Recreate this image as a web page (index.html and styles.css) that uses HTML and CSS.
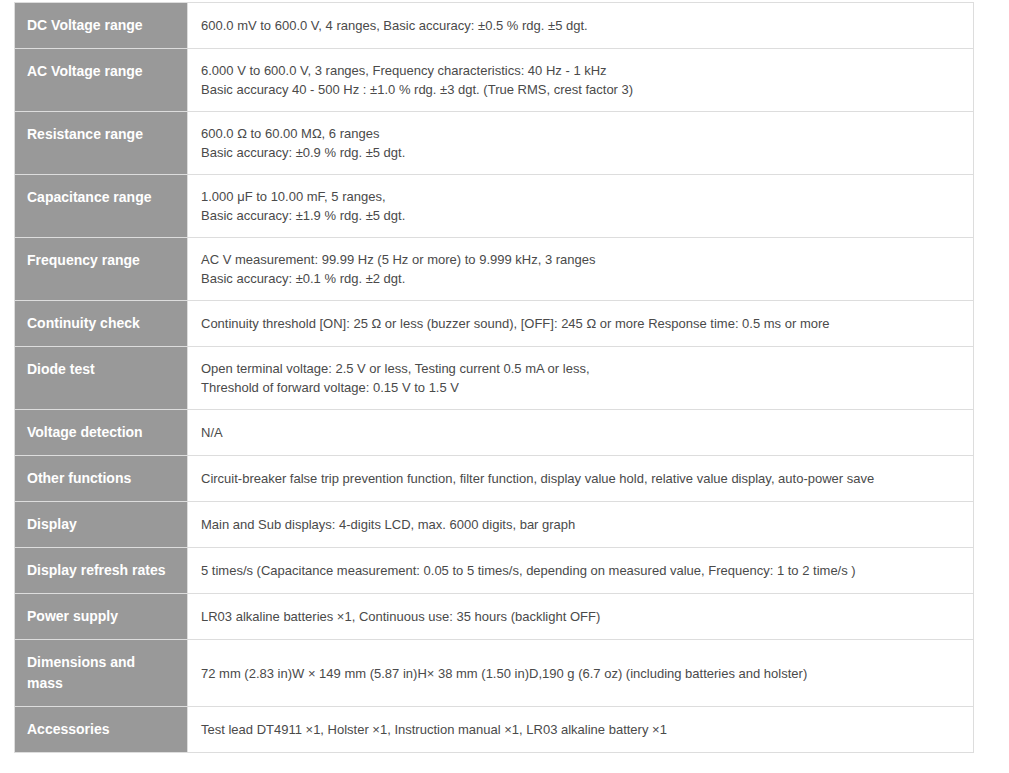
FILE: index.html
```html
<!DOCTYPE html>
<html>
<head>
<meta charset="utf-8">
<link rel="stylesheet" href="styles.css">
</head>
<body>
<div class="wrap">
<table class="spec">
<tr><th>DC Voltage range</th><td>600.0 mV to 600.0 V, 4 ranges, Basic accuracy: ±0.5 % rdg. ±5 dgt.</td></tr>
<tr><th>AC Voltage range</th><td>6.000 V to 600.0 V, 3 ranges, Frequency characteristics: 40 Hz - 1 kHz<br>Basic accuracy 40 - 500 Hz : ±1.0 % rdg. ±3 dgt. (True RMS, crest factor 3)</td></tr>
<tr><th>Resistance range</th><td>600.0 Ω to 60.00 MΩ, 6 ranges<br>Basic accuracy: ±0.9 % rdg. ±5 dgt.</td></tr>
<tr><th>Capacitance range</th><td>1.000 μF to 10.00 mF, 5 ranges,<br>Basic accuracy: ±1.9 % rdg. ±5 dgt.</td></tr>
<tr><th>Frequency range</th><td>AC V measurement: 99.99 Hz (5 Hz or more) to 9.999 kHz, 3 ranges<br>Basic accuracy: ±0.1 % rdg. ±2 dgt.</td></tr>
<tr><th>Continuity check</th><td>Continuity threshold [ON]: 25 Ω or less (buzzer sound), [OFF]: 245 Ω or more Response time: 0.5 ms or more</td></tr>
<tr><th>Diode test</th><td>Open terminal voltage: 2.5 V or less, Testing current 0.5 mA or less,<br>Threshold of forward voltage: 0.15 V to 1.5 V</td></tr>
<tr><th>Voltage detection</th><td>N/A</td></tr>
<tr><th>Other functions</th><td>Circuit-breaker false trip prevention function, filter function, display value hold, relative value display, auto-power save</td></tr>
<tr><th>Display</th><td>Main and Sub displays: 4-digits LCD, max. 6000 digits, bar graph</td></tr>
<tr><th>Display refresh rates</th><td>5 times/s (Capacitance measurement: 0.05 to 5 times/s, depending on measured value, Frequency: 1 to 2 time/s )</td></tr>
<tr><th>Power supply</th><td>LR03 alkaline batteries ×1, Continuous use: 35 hours (backlight OFF)</td></tr>
<tr><th>Dimensions and mass</th><td>72 mm (2.83 in)W × 149 mm (5.87 in)H× 38 mm (1.50 in)D,190 g (6.7 oz) (including batteries and holster)</td></tr>
<tr><th>Accessories</th><td>Test lead DT4911 ×1, Holster ×1, Instruction manual ×1, LR03 alkaline battery ×1</td></tr>
</table>
</div>
</body>
</html>
```
FILE: styles.css
```css
html, body {
  margin: 0;
  padding: 0;
  background: #ffffff;
}
.wrap {
  padding: 2px 0 0 14px;
}
.spec {
  width: 960px;
  border-collapse: collapse;
  font-family: "Liberation Sans", Arial, sans-serif;
}
.spec th, .spec td {
  border: 1px solid #dddddd;
  padding: 12px 13px;
  text-align: left;
}
.spec th {
  width: 147px;
  padding-left: 12px;
  background: #999999;
  color: #ffffff;
  font-size: 14px;
  line-height: 21px;
  font-weight: bold;
  vertical-align: top;
}
.spec td {
  color: #4a4a4a;
  font-size: 13px;
  line-height: 19px;
  vertical-align: middle;
}
```
